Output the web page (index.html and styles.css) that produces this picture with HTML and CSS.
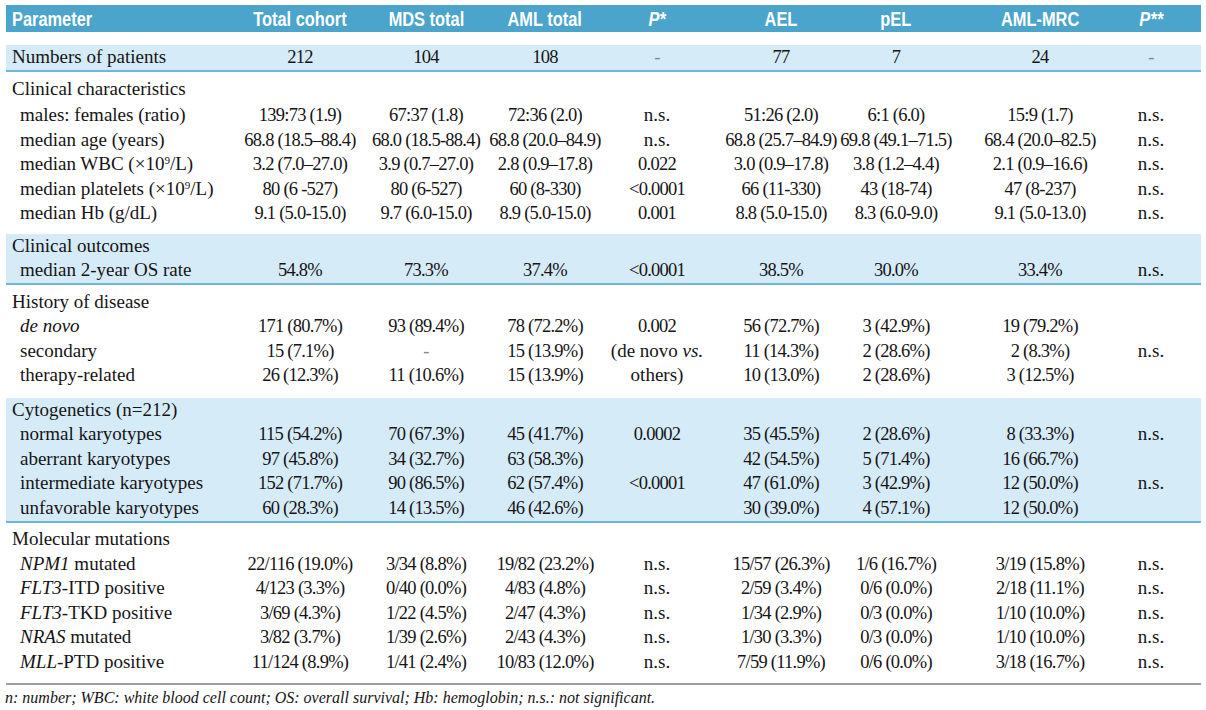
FILE: index.html
```html
<!DOCTYPE html>
<html lang="en">
<head>
<meta charset="utf-8">
<title>Patient characteristics</title>
<link rel="stylesheet" href="styles.css">
</head>
<body>
<div class="page">
  <div class="row head">
    <div class="c lft"><span class="hx">Parameter</span></div>
    <div class="c"><span class="hx">Total cohort</span></div>
    <div class="c"><span class="hx">MDS total</span></div>
    <div class="c"><span class="hx">AML total</span></div>
    <div class="c"><span class="hx"><i>P*</i></span></div>
    <div class="c"><span class="hx">AEL</span></div>
    <div class="c"><span class="hx">pEL</span></div>
    <div class="c"><span class="hx">AML-MRC</span></div>
    <div class="c"><span class="hx"><i>P**</i></span></div>
  </div>

  <div class="group band single">
    <div class="row">
      <div class="ttl">Numbers of patients</div>
      <div class="c n">212</div><div class="c n">104</div><div class="c n">108</div><div class="c n dash">-</div>
      <div class="c n">77</div><div class="c n">7</div><div class="c n">24</div><div class="c n dash">-</div>
    </div>
  </div>

  <div class="group g1">
    <div class="row first"><div class="ttl">Clinical characteristics</div></div>
    <div class="row">
      <div class="lbl">males: females (ratio)</div>
      <div class="c n">139:73 (1.9)</div><div class="c n">67:37 (1.8)</div><div class="c n">72:36 (2.0)</div><div class="c t">n.s.</div>
      <div class="c n">51:26 (2.0)</div><div class="c n">6:1 (6.0)</div><div class="c n">15:9 (1.7)</div><div class="c t">n.s.</div>
    </div>
    <div class="row">
      <div class="lbl">median age (years)</div>
      <div class="c n">68.8 (18.5–88.4)</div><div class="c n">68.0 (18.5-88.4)</div><div class="c n">68.8 (20.0–84.9)</div><div class="c t">n.s.</div>
      <div class="c n">68.8 (25.7–84.9)</div><div class="c n">69.8 (49.1–71.5)</div><div class="c n">68.4 (20.0–82.5)</div><div class="c t">n.s.</div>
    </div>
    <div class="row">
      <div class="lbl">median WBC (×10<sup>9</sup>/L)</div>
      <div class="c n">3.2 (7.0–27.0)</div><div class="c n">3.9 (0.7–27.0)</div><div class="c n">2.8 (0.9–17.8)</div><div class="c n">0.022</div>
      <div class="c n">3.0 (0.9–17.8)</div><div class="c n">3.8 (1.2–4.4)</div><div class="c n">2.1 (0.9–16.6)</div><div class="c t">n.s.</div>
    </div>
    <div class="row">
      <div class="lbl">median platelets (×10<sup>9</sup>/L)</div>
      <div class="c n">80 (6 -527)</div><div class="c n">80 (6-527)</div><div class="c n">60 (8-330)</div><div class="c n">&lt;0.0001</div>
      <div class="c n">66 (11-330)</div><div class="c n">43 (18-74)</div><div class="c n">47 (8-237)</div><div class="c t">n.s.</div>
    </div>
    <div class="row">
      <div class="lbl">median Hb (g/dL)</div>
      <div class="c n">9.1 (5.0-15.0)</div><div class="c n">9.7 (6.0-15.0)</div><div class="c n">8.9 (5.0-15.0)</div><div class="c n">0.001</div>
      <div class="c n">8.8 (5.0-15.0)</div><div class="c n">8.3 (6.0-9.0)</div><div class="c n">9.1 (5.0-13.0)</div><div class="c t">n.s.</div>
    </div>
  </div>

  <div class="group band b2">
    <div class="row"><div class="ttl">Clinical outcomes</div></div>
    <div class="row">
      <div class="lbl">median 2-year OS rate</div>
      <div class="c n">54.8%</div><div class="c n">73.3%</div><div class="c n">37.4%</div><div class="c n">&lt;0.0001</div>
      <div class="c n">38.5%</div><div class="c n">30.0%</div><div class="c n">33.4%</div><div class="c t">n.s.</div>
    </div>
  </div>

  <div class="group g3">
    <div class="row"><div class="ttl">History of disease</div></div>
    <div class="row">
      <div class="lbl"><i>de novo</i></div>
      <div class="c n">171 (80.7%)</div><div class="c n">93 (89.4%)</div><div class="c n">78 (72.2%)</div><div class="c n">0.002</div>
      <div class="c n">56 (72.7%)</div><div class="c n">3 (42.9%)</div><div class="c n">19 (79.2%)</div><div class="c t"></div>
    </div>
    <div class="row">
      <div class="lbl">secondary</div>
      <div class="c n">15 (7.1%)</div><div class="c n dash">-</div><div class="c n">15 (13.9%)</div><div class="c t"><span>(de novo <i>vs.</i></span></div>
      <div class="c n">11 (14.3%)</div><div class="c n">2 (28.6%)</div><div class="c n">2 (8.3%)</div><div class="c t">n.s.</div>
    </div>
    <div class="row">
      <div class="lbl">therapy-related</div>
      <div class="c n">26 (12.3%)</div><div class="c n">11 (10.6%)</div><div class="c n">15 (13.9%)</div><div class="c t">others)</div>
      <div class="c n">10 (13.0%)</div><div class="c n">2 (28.6%)</div><div class="c n">3 (12.5%)</div><div class="c t"></div>
    </div>
  </div>

  <div class="group band b4">
    <div class="row"><div class="ttl">Cytogenetics (n=212)</div></div>
    <div class="row">
      <div class="lbl">normal karyotypes</div>
      <div class="c n">115 (54.2%)</div><div class="c n">70 (67.3%)</div><div class="c n">45 (41.7%)</div><div class="c n">0.0002</div>
      <div class="c n">35 (45.5%)</div><div class="c n">2 (28.6%)</div><div class="c n">8 (33.3%)</div><div class="c t">n.s.</div>
    </div>
    <div class="row">
      <div class="lbl">aberrant karyotypes</div>
      <div class="c n">97 (45.8%)</div><div class="c n">34 (32.7%)</div><div class="c n">63 (58.3%)</div><div class="c n"></div>
      <div class="c n">42 (54.5%)</div><div class="c n">5 (71.4%)</div><div class="c n">16 (66.7%)</div><div class="c t"></div>
    </div>
    <div class="row">
      <div class="lbl">intermediate karyotypes</div>
      <div class="c n">152 (71.7%)</div><div class="c n">90 (86.5%)</div><div class="c n">62 (57.4%)</div><div class="c n">&lt;0.0001</div>
      <div class="c n">47 (61.0%)</div><div class="c n">3 (42.9%)</div><div class="c n">12 (50.0%)</div><div class="c t">n.s.</div>
    </div>
    <div class="row">
      <div class="lbl">unfavorable karyotypes</div>
      <div class="c n">60 (28.3%)</div><div class="c n">14 (13.5%)</div><div class="c n">46 (42.6%)</div><div class="c n"></div>
      <div class="c n">30 (39.0%)</div><div class="c n">4 (57.1%)</div><div class="c n">12 (50.0%)</div><div class="c t"></div>
    </div>
  </div>

  <div class="group g5">
    <div class="row"><div class="ttl">Molecular mutations</div></div>
    <div class="row">
      <div class="lbl"><i>NPM1</i> mutated</div>
      <div class="c n">22/116 (19.0%)</div><div class="c n">3/34 (8.8%)</div><div class="c n">19/82 (23.2%)</div><div class="c t">n.s.</div>
      <div class="c n">15/57 (26.3%)</div><div class="c n">1/6 (16.7%)</div><div class="c n">3/19 (15.8%)</div><div class="c t">n.s.</div>
    </div>
    <div class="row">
      <div class="lbl"><i>FLT3</i>-ITD positive</div>
      <div class="c n">4/123 (3.3%)</div><div class="c n">0/40 (0.0%)</div><div class="c n">4/83 (4.8%)</div><div class="c t">n.s.</div>
      <div class="c n">2/59 (3.4%)</div><div class="c n">0/6 (0.0%)</div><div class="c n">2/18 (11.1%)</div><div class="c t">n.s.</div>
    </div>
    <div class="row">
      <div class="lbl"><i>FLT3</i>-TKD positive</div>
      <div class="c n">3/69 (4.3%)</div><div class="c n">1/22 (4.5%)</div><div class="c n">2/47 (4.3%)</div><div class="c t">n.s.</div>
      <div class="c n">1/34 (2.9%)</div><div class="c n">0/3 (0.0%)</div><div class="c n">1/10 (10.0%)</div><div class="c t">n.s.</div>
    </div>
    <div class="row">
      <div class="lbl"><i>NRAS</i> mutated</div>
      <div class="c n">3/82 (3.7%)</div><div class="c n">1/39 (2.6%)</div><div class="c n">2/43 (4.3%)</div><div class="c t">n.s.</div>
      <div class="c n">1/30 (3.3%)</div><div class="c n">0/3 (0.0%)</div><div class="c n">1/10 (10.0%)</div><div class="c t">n.s.</div>
    </div>
    <div class="row">
      <div class="lbl"><i>MLL</i>-PTD positive</div>
      <div class="c n">11/124 (8.9%)</div><div class="c n">1/41 (2.4%)</div><div class="c n">10/83 (12.0%)</div><div class="c t">n.s.</div>
      <div class="c n">7/59 (11.9%)</div><div class="c n">0/6 (0.0%)</div><div class="c n">3/18 (16.7%)</div><div class="c t">n.s.</div>
    </div>
  </div>

  <p class="note">n: number; WBC: white blood cell count; OS: overall survival; Hb: hemoglobin; n.s.: not significant.</p>
</div>
</body>
</html>
```

FILE: styles.css
```css
html, body {
  margin: 0;
  padding: 0;
  background: #ffffff;
}

.page {
  width: 1195px;
  padding: 5px 0 0 6px;
  font-family: "Liberation Serif", "Times New Roman", serif;
  color: #161415;
}

.row {
  display: grid;
  grid-template-columns: 230px 128px 124px 114px 110px 138px 92px 196px 63px;
  height: 24.5px;
  line-height: 24.5px;
  font-size: 19px;
}

.c {
  display: flex;
  justify-content: center;
  white-space: nowrap;
}

.row > .c:nth-child(9) {
  padding-right: 37px;
}

.head {
  background: #4ba4cc;
  color: #ffffff;
  font-family: "Liberation Sans", Arial, sans-serif;
  font-weight: bold;
  font-size: 21px;
  height: 27px;
  line-height: 27px;
  margin-bottom: 13px;
}

.hx {
  display: inline-block;
  transform: scaleX(0.78);
}

.head .lft {
  justify-content: flex-start;
  padding-left: 6px;
}

.head .lft .hx {
  transform-origin: left center;
}

.ttl {
  padding-left: 6px;
  white-space: nowrap;
}

.lbl {
  padding-left: 14px;
  white-space: nowrap;
}

.n {
  font-size: 18.5px;
  letter-spacing: -0.75px;
}

.dash {
  color: #8a8a8a;
}

sup {
  font-size: 11px;
  line-height: 0;
  vertical-align: 6px;
}

.band {
  background: #d6ebf8;
  border-bottom: 2px solid #6db8d8;
}

.single {
  padding: 0;
}

.g1 {
  padding: 5px 0 8px;
}

.g1 .first {
  margin-bottom: 2px;
}

.b2 {
  padding: 0 0 0.5px;
}

.g3 {
  padding: 4.5px 0 10px;
}

.b4 {
  padding: 0 0 1px;
}

.g5 {
  padding: 4px 0 9px;
  border-bottom: 2.5px solid #9d9d9d;
}

.note {
  margin: 3px 0 0 -1px;
  font-family: "Liberation Serif", "Times New Roman", serif;
  font-style: italic;
  font-size: 16px;
  line-height: 20px;
  color: #161415;
}
```
